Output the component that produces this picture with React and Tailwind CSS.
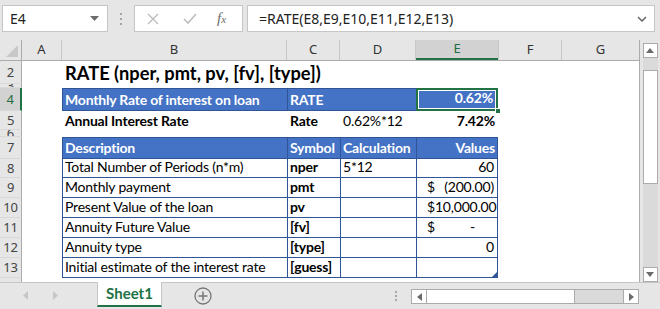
import React from "react";

const F = { fontFamily: "Lato, 'Liberation Sans', sans-serif" };

function RH({ n, sel }) {
  return (
    <div
      className={`w-[22px] shrink-0 flex items-center justify-center overflow-hidden border-b border-[#d9d9d9] text-[13px] font-['Noto_Sans',sans-serif] ${
        sel ? "bg-[#d2d2d2] border-r-2 border-r-[#217346] text-[#1e6c41]" : "bg-[#e6e6e6] border-r border-r-[#ababab] text-[#444]"
      }`}
    >
      <span className="leading-none">{n}</span>
    </div>
  );
}

function Tbl({ w, last, top, head, bold, right, children, extra }) {
  return (
    <div
      className={`${w} shrink-0 relative flex items-end pb-[1px] px-[2px] whitespace-nowrap border-b border-l border-[#2f5597] ${last ? "border-r" : ""} ${top ? "border-t" : ""} ${
        head ? "bg-[#4472c4] text-white font-bold" : "bg-white text-black"
      } ${bold ? "font-bold" : ""} ${right ? "justify-end" : ""}`}
    >
      {children}
      {extra}
    </div>
  );
}

const rowText = "text-[14px] leading-[18px] tracking-[-0.2px]";

export default function App() {
  return (
    <div className="w-[660px] h-[309px] bg-[#e6e6e6] overflow-hidden relative" style={F}>
      {/* Formula bar */}
      <div className="h-[40px] flex items-start pt-[5px] pl-[2px] gap-0">
        <div className="w-[106px] h-[27px] bg-white border border-[#c6c6c6] flex items-center pl-[7px] pr-[8px] justify-between font-['Noto_Sans',sans-serif] text-[14px] text-[#222]">
          <span>E4</span>
          <svg width="9" height="5" viewBox="0 0 9 5"><path d="M0 0h9L4.5 5z" fill="#6b6b6b" /></svg>
        </div>
        <div className="w-[26px] h-[27px] flex flex-col items-center justify-center gap-[3px]">
          <div className="w-[2px] h-[2px] bg-[#a6a6a6]" />
          <div className="w-[2px] h-[2px] bg-[#a6a6a6]" />
          <div className="w-[2px] h-[2px] bg-[#a6a6a6]" />
        </div>
        <div className="w-[109px] h-[27px] bg-white border border-[#c6c6c6] flex items-center">
          <svg className="ml-[12px]" width="12" height="12" viewBox="0 0 12 12"><path d="M1 1l10 10M11 1L1 11" stroke="#bdbdbd" strokeWidth="1.4" /></svg>
          <svg className="ml-[24px]" width="14" height="12" viewBox="0 0 14 12"><path d="M1 6l4 4 8-9" stroke="#bdbdbd" strokeWidth="1.6" fill="none" /></svg>
          <span className="ml-[20px] italic text-[15px] text-[#6b6b6b] font-['Liberation_Serif',serif]">f<span className="text-[11px]">x</span></span>
        </div>
        <div className="ml-[4px] w-[408px] h-[27px] bg-white border border-[#c6c6c6] flex items-center justify-between pl-[11px] pr-[7px] font-['Noto_Sans',sans-serif] text-[14px] text-[#222]">
          <span>=RATE(E8,E9,E10,E11,E12,E13)</span>
          <svg width="10" height="6" viewBox="0 0 10 6"><path d="M1 1l4 4 4-4" stroke="#6b6b6b" strokeWidth="1.6" fill="none" /></svg>
        </div>
      </div>

      {/* Sheet area */}
      <div className="flex h-[242px]">
        <div className="w-[640px] flex flex-col bg-white border-r border-[#ababab]">
          {/* column headers */}
          <div className="h-[21px] flex bg-[#e6e6e6] border-b border-[#ababab] font-['Noto_Sans',sans-serif] text-[13px] text-[#333]">
            <div className="w-[22px] shrink-0 relative border-r border-[#ababab]">
              <svg className="absolute right-[3px] bottom-[3px]" width="12" height="12" viewBox="0 0 12 12"><path d="M12 0V12H0z" fill="#c8c8c8" /></svg>
            </div>
            <div className="w-[40px] shrink-0 flex items-center justify-center border-r border-[#c8c8c8]">A</div>
            <div className="w-[225px] shrink-0 flex items-center justify-center border-r border-[#c8c8c8]">B</div>
            <div className="w-[53px] shrink-0 flex items-center justify-center border-r border-[#c8c8c8]">C</div>
            <div className="w-[76px] shrink-0 flex items-center justify-center border-r border-[#c8c8c8]">D</div>
            <div className="w-[82px] shrink-0 flex items-center justify-center bg-[#d2d2d2] border-b-2 border-[#217346] text-[#1e6c41]">E</div>
            <div className="w-[64px] shrink-0 flex items-center justify-center border-r border-l border-[#c8c8c8]">F</div>
            <div className="w-[77px] shrink-0 flex items-center justify-center">G</div>
          </div>

          {/* row 2 */}
          <div className="flex h-[23px] text-black">
            <RH n="2" />
            <div className="w-[40px] shrink-0" />
            <div className="pl-[3px] flex items-end text-[18.3px] font-bold leading-[22px] whitespace-nowrap">RATE (nper, pmt, pv, [fv], [type])</div>
          </div>
          {/* row 3 */}
          <div className="flex h-[4px]">
            <RH n="3" />
          </div>
          {/* row 4 */}
          <div className={`flex h-[23px] ${rowText}`}>
            <RH n="4" sel />
            <div className="w-[40px] shrink-0" />
            <Tbl w="w-[225px]" head top>Monthly Rate of interest on loan</Tbl>
            <Tbl w="w-[53px]" head top>RATE</Tbl>
            <div className="w-[76px] shrink-0 bg-[#4472c4] border-t border-b border-[#2f5597]" />
            <div className="w-[82px] shrink-0 relative bg-[#4472c4] border-t border-b border-[#2f5597]">
              <div className="absolute inset-0 -top-[1px] -bottom-[1px] border-2 border-[#217346] flex items-end justify-end pr-[3px] pb-[2px]">
                <div className="absolute inset-0 border border-white" />
                <span className="text-white font-bold">0.62%</span>
              </div>
              <div className="absolute right-[-3px] bottom-[-4px] w-[6px] h-[6px] bg-[#217346] border border-white" />
            </div>
          </div>
          {/* row 5 */}
          <div className={`flex h-[19px] ${rowText} whitespace-nowrap`}>
            <RH n="5" />
            <div className="w-[40px] shrink-0" />
            <div className="w-[225px] shrink-0 pl-[3px] font-bold flex items-end">Annual Interest Rate</div>
            <div className="w-[53px] shrink-0 pl-[3px] font-bold flex items-end">Rate</div>
            <div className="w-[76px] shrink-0 pl-[3px] flex items-end">0.62%*12</div>
            <div className="w-[82px] shrink-0 pr-[3px] font-bold flex items-end justify-end">7.42%</div>
          </div>
          {/* row 6 */}
          <div className="flex h-[7px]">
            <RH n="6" />
          </div>
          {/* row 7 */}
          <div className={`flex h-[22px] ${rowText}`}>
            <RH n="7" />
            <div className="w-[40px] shrink-0" />
            <Tbl w="w-[225px]" head top>Description</Tbl>
            <Tbl w="w-[53px]" head top>Symbol</Tbl>
            <Tbl w="w-[76px]" head top>Calculation</Tbl>
            <Tbl w="w-[82px]" head top last right>Values</Tbl>
          </div>
          {[
            ["8", "h-[19px]", "Total Number of Periods (n*m)", "nper", "5*12", "60"],
            ["9", "h-[20px]", "Monthly payment", "pmt", "", "neg"],
            ["10", "h-[20px]", "Present Value of the loan", "pv", "", "pos"],
            ["11", "h-[20px]", "Annuity Future Value", "[fv]", "", "dash"],
            ["12", "h-[20px]", "Annuity type", "[type]", "", "0"],
            ["13", "h-[20px]", "Initial estimate of the interest rate", "[guess]", "", ""],
          ].map(([n, h, d, s, c, v]) => {
            let val = null;
            let right = false;
            if (v === "dash")
              val = (
                <div className="flex w-full justify-between pl-[8px] pr-[20px]">
                  <span>$</span>
                  <span>-</span>
                </div>
              );
            else if (v === "pos")
              val = (
                <div className="flex w-full justify-between pl-[8px] pr-[6px]">
                  <span>$10,000.00</span>
                </div>
              );
            else if (v === "neg")
              val = (
                <div className="flex w-full justify-between pl-[8px] pr-[1px]">
                  <span>$</span>
                  <span>(200.00)</span>
                </div>
              );
            else if (v) {
              val = <span className="pr-[1px]">{v}</span>;
              right = true;
            }
            return (
              <div key={n} className={`flex ${h} ${rowText}`}>
                <RH n={n} />
                <div className="w-[40px] shrink-0" />
                <Tbl w="w-[225px]">{d}</Tbl>
                <Tbl w="w-[53px]" bold>{s}</Tbl>
                <Tbl w="w-[76px]">{c}</Tbl>
                <Tbl
                  w="w-[82px]"
                  last
                  right={right}
                  extra={n === "13" ? <svg className="absolute right-0 bottom-0" width="5" height="5" viewBox="0 0 5 5"><path d="M5 0V5H0z" fill="#2f5597" /></svg> : null}
                >
                  {val}
                </Tbl>
              </div>
            );
          })}
          {/* row 14 partial */}
          <div className="flex flex-1">
            <div className="w-[22px] shrink-0 bg-[#e6e6e6] border-r border-[#ababab]" />
          </div>
        </div>
        {/* vertical scrollbar */}
        <div className="w-[20px] flex flex-col items-center pt-[3px] pb-0 bg-[#e6e6e6]">
          <div className="w-[15px] h-[15px] bg-white border border-[#ababab] flex items-center justify-center">
            <svg width="8" height="5" viewBox="0 0 8 5"><path d="M0 5h8L4 0z" fill="#6b6b6b" /></svg>
          </div>
          <div className="w-[15px] flex-1 bg-[#dadada] flex flex-col pt-[12px]">
            <div className="h-[114px] bg-white border border-[#ababab]" />
          </div>
          <div className="w-[15px] h-[15px] bg-white border border-[#ababab] flex items-center justify-center">
            <svg width="8" height="5" viewBox="0 0 8 5"><path d="M0 0h8L4 5z" fill="#6b6b6b" /></svg>
          </div>
        </div>
      </div>

      {/* tab bar */}
      <div className="h-[27px] flex items-start border-t border-[#c6c6c6]">
        <div className="w-[97px] h-[25px] flex items-center">
          <svg className="ml-[23px]" width="5" height="9" viewBox="0 0 5 9"><path d="M5 0v9L0 4.5z" fill="#c6c6c6" /></svg>
          <svg className="ml-[25px]" width="5" height="9" viewBox="0 0 5 9"><path d="M0 0v9l5-4.5z" fill="#c6c6c6" /></svg>
        </div>
        <div className="w-[65px] h-[25px] -mt-[1px] bg-white border-x border-[#c6c6c6] border-b-2 border-b-[#217346] flex items-center justify-center text-[15px] font-bold text-[#217346]">
          Sheet1
        </div>
        <div className="ml-[32px] mt-[4px]">
          <svg width="18" height="18" viewBox="0 0 18 18">
            <circle cx="9" cy="9" r="8" stroke="#777" strokeWidth="1.3" fill="none" />
            <path d="M9 4.5v9M4.5 9h9" stroke="#777" strokeWidth="1.5" />
          </svg>
        </div>
        <div className="ml-[183px] mt-[8px] flex flex-col gap-[2px]">
          <div className="w-[2px] h-[2px] bg-[#a6a6a6]" />
          <div className="w-[2px] h-[2px] bg-[#a6a6a6]" />
          <div className="w-[2px] h-[2px] bg-[#a6a6a6]" />
        </div>
        <div className="ml-[14px] mt-[6px] w-[228px] h-[15px] flex border border-[#ababab] bg-[#dadada]">
          <div className="w-[15px] h-full bg-white border-r border-[#ababab] flex items-center justify-center">
            <svg width="5" height="8" viewBox="0 0 5 8"><path d="M5 0v8L0 4z" fill="#6b6b6b" /></svg>
          </div>
          <div className="w-[148px] h-full bg-white border-r border-[#ababab]" />
          <div className="flex-1" />
          <div className="w-[15px] h-full bg-white border-l border-[#ababab] flex items-center justify-center">
            <svg width="5" height="8" viewBox="0 0 5 8"><path d="M0 0v8l5-4z" fill="#6b6b6b" /></svg>
          </div>
        </div>
      </div>
    </div>
  );
}
